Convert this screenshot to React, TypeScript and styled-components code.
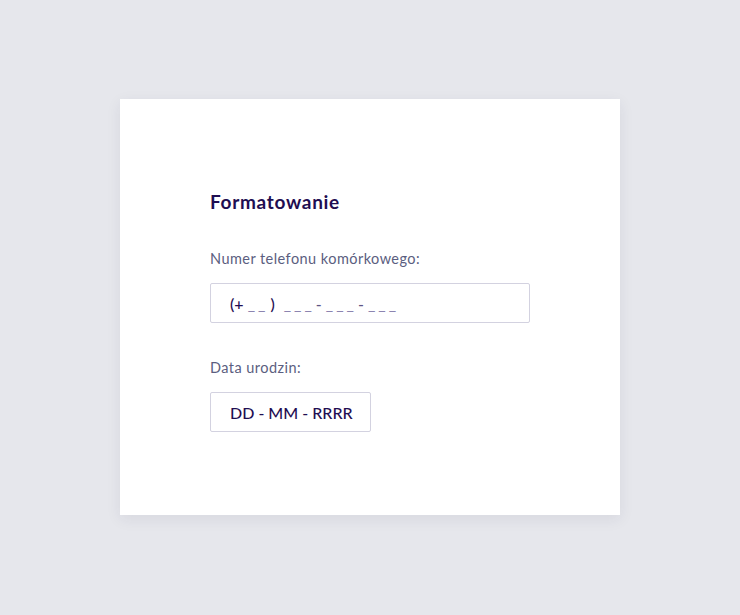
import React from "react";
import styled, { createGlobalStyle } from "styled-components";

const GlobalStyle = createGlobalStyle`
  html, body {
    margin: 0;
    padding: 0;
    background: #e6e7ec;
    font-family: Lato, "Open Sans", sans-serif;
  }
`;

const Page = styled.div`
  width: 740px;
  height: 615px;
  display: flex;
  justify-content: center;
  padding-top: 99px;
  box-sizing: border-box;
`;

const Card = styled.div`
  width: 500px;
  height: 416px;
  background: #ffffff;
  box-shadow: 0 4px 14px rgba(40, 40, 80, 0.08);
  padding: 91px 90px 0;
  box-sizing: border-box;
`;

const Title = styled.h2`
  margin: 0 0 35px;
  font-size: 19px;
  line-height: 24px;
  font-weight: 700;
  letter-spacing: 0.7px;
  color: #1f0e52;
`;

const Field = styled.div`
  display: flex;
  flex-direction: column;
  align-items: flex-start;
  margin-bottom: 35px;
`;

const Label = styled.label`
  font-size: 14.5px;
  line-height: 20px;
  letter-spacing: 0.45px;
  color: #5b5e80;
  margin-bottom: 14px;
`;

const Box = styled.div<{ $width: number }>`
  width: ${(p) => p.$width}px;
  height: 40px;
  box-sizing: border-box;
  border: 1px solid #d3d2e0;
  border-radius: 2px;
  display: flex;
  align-items: center;
  padding: 0 19px;
  font-size: 16px;
  font-weight: 500;
  color: #1f0e52;
  white-space: pre;
`;

const Blank = styled.span`
  color: #8c84b0;
  letter-spacing: 3px;
`;

const Sep = styled.span`
  color: #5f5685;
  margin: 0 4px 0 1px;
`;

const Paren = styled.span`
  margin: 0 9px 0 2px;
`;

export default function App() {
  return (
    <>
      <GlobalStyle />
      <Page>
        <Card>
          <Title>Formatowanie</Title>
          <Field>
            <Label>Numer telefonu komórkowego:</Label>
            <Box $width={320}>
              {"(+ "}
              <Blank>__</Blank>
              <Paren>)</Paren>
              <Blank>___</Blank>
              <Sep>-</Sep>
              <Blank>___</Blank>
              <Sep>-</Sep>
              <Blank>___</Blank>
            </Box>
          </Field>
          <Field>
            <Label>Data urodzin:</Label>
            <Box $width={161}>DD - MM - RRRR</Box>
          </Field>
        </Card>
      </Page>
    </>
  );
}
